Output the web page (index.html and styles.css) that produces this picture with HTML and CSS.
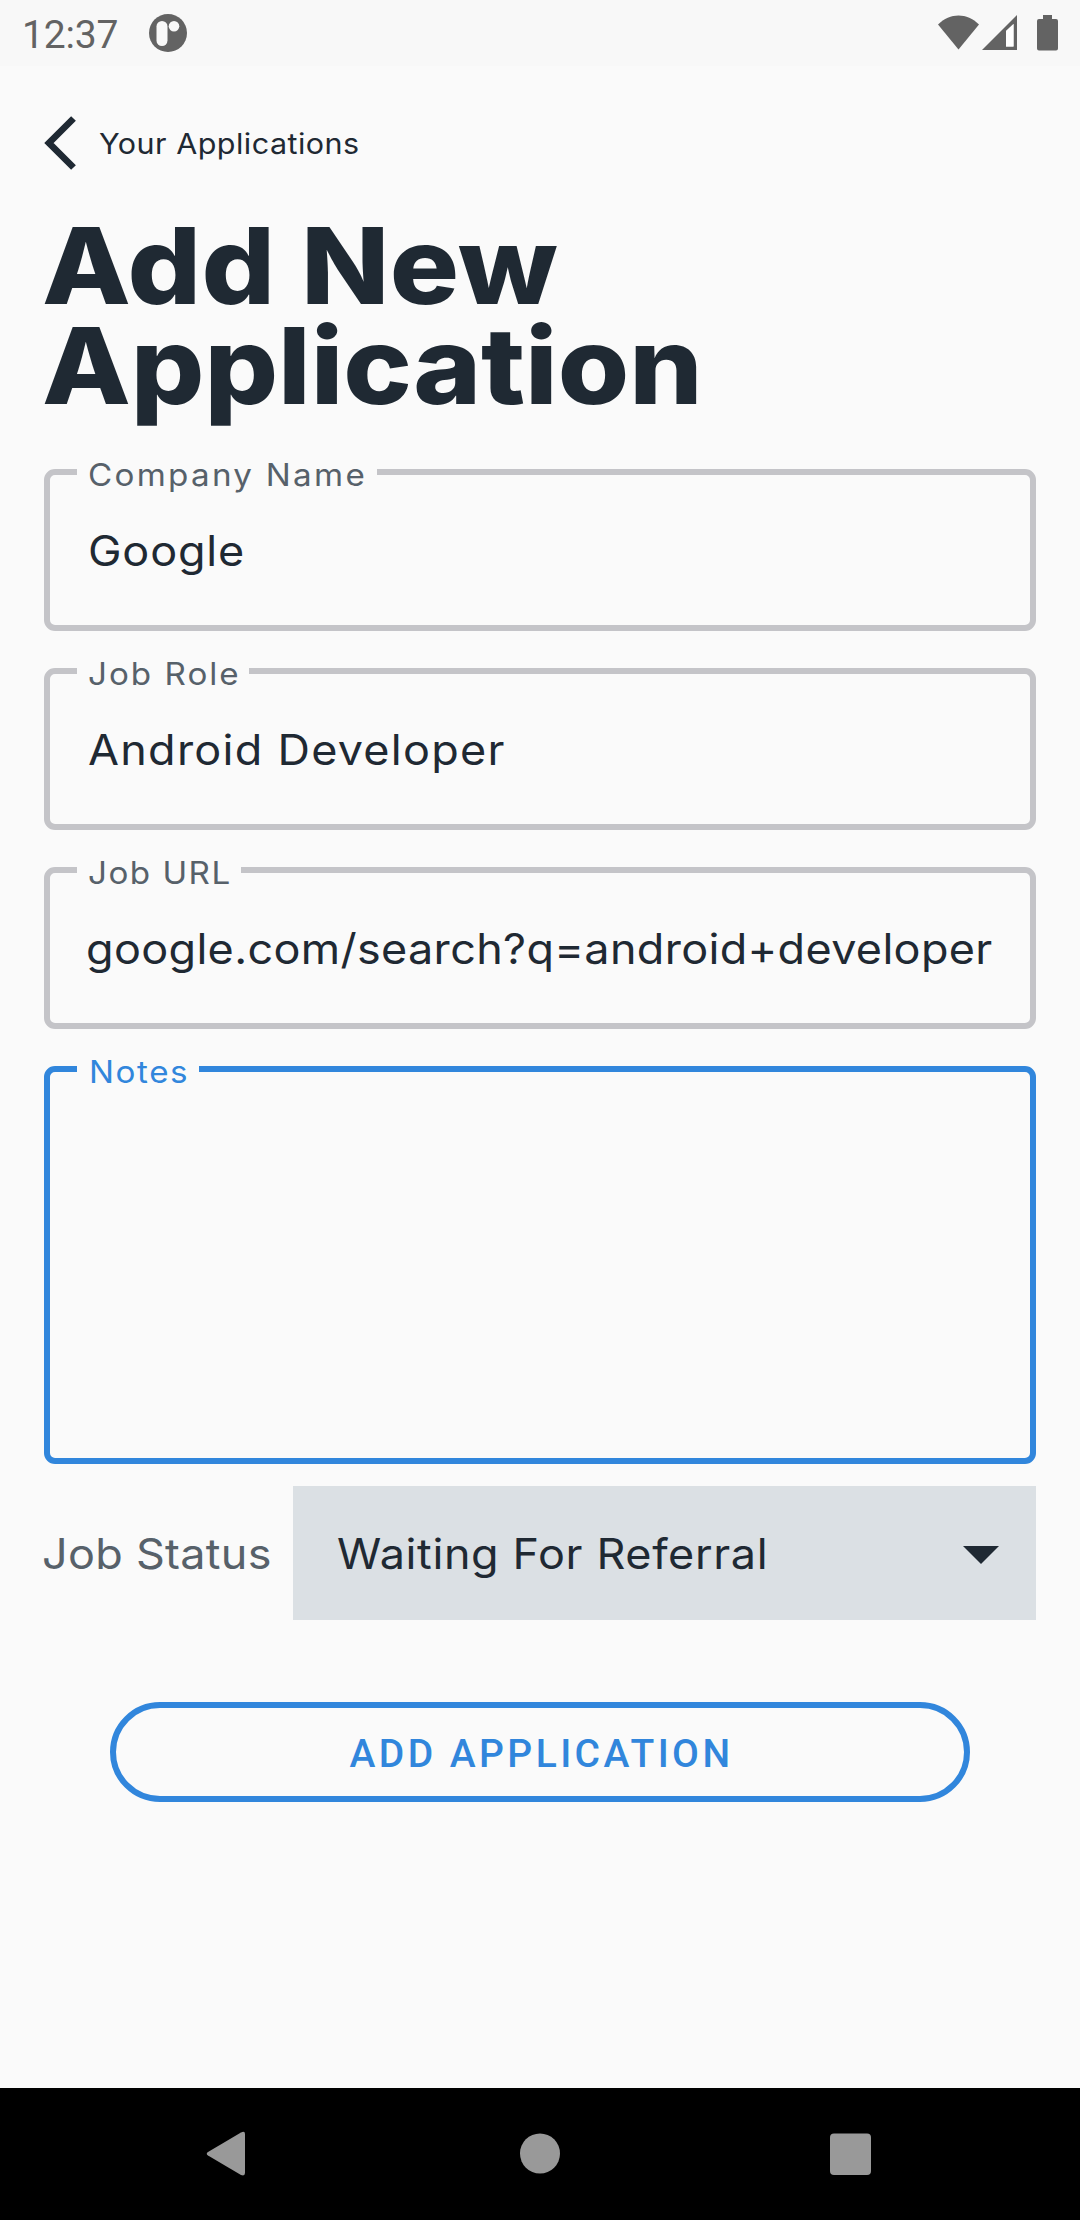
FILE: index.html
```html
<!DOCTYPE html>
<html lang="en">
<head>
<meta charset="utf-8">
<title>Add New Application</title>
<link rel="stylesheet" href="styles.css">
</head>
<body>
<div class="screen">
  <header class="status-bar">
    <span class="clock">12:37</span>
    <svg class="app-icon" width="38" height="38" viewBox="0 0 38 38">
      <circle cx="19" cy="19" r="19" fill="#636363"/>
      <rect x="7.5" y="7" width="11" height="25" rx="5.5" fill="#f8f8f8"/>
      <circle cx="25" cy="12.3" r="5.3" fill="#f8f8f8"/>
    </svg>
    <svg class="system-icons" width="122" height="38" viewBox="0 0 122 38" fill="#636363">
      <path d="M0 10.5C12-1.600 29-1.600 41 10.500L20.500 35.500Z"/>
      <path fill-rule="evenodd" d="M44 36L79 1V36ZM68 17V32.500H75.500V10Z"/>
      <path fill="#fff" d="M68 17V32.500H75.500V10Z"/>
      <path d="M105 1h9v4h4a2 2 0 0 1 2 2v27.500a2 2 0 0 1-2 2h-17a2 2 0 0 1-2-2V7a2 2 0 0 1 2-2h4z"/>
    </svg>
  </header>

  <main class="content">
    <a class="back">
      <svg class="back-icon" width="32" height="54" viewBox="0 0 32 54">
        <path d="M29.500 2.500L5 27L29.500 51.500" fill="none" stroke="#1f2933" stroke-width="6.700"/>
      </svg>
      <span class="back-text wide">Your Applications</span>
    </a>

    <h1 class="title"><span class="title-top">Add New</span><br>Application</h1>

    <form class="form">
      <div class="field">
        <label class="label label-company"><span class="wide">Company Name</span></label>
        <div class="value value-company wide">Google</div>
      </div>
      <div class="field">
        <label class="label label-role"><span class="wide">Job Role</span></label>
        <div class="value value-role wide">Android Developer</div>
      </div>
      <div class="field">
        <label class="label label-url"><span class="wide">Job URL</span></label>
        <div class="value value-url wide">google.com/search?q=android+developer</div>
      </div>
      <div class="field field-notes">
        <label class="label label-notes"><span class="wide">Notes</span></label>
      </div>
    </form>

    <div class="status-row">
      <div class="status-label"><span class="wide">Job Status</span></div>
      <div class="select">
        <span class="wide">Waiting For Referral</span>
        <svg class="caret" width="36" height="18" viewBox="0 0 36 18"><path d="M0 0H36L18 18Z" fill="#1f2933"/></svg>
      </div>
    </div>

    <button class="submit" type="button">ADD APPLICATION</button>
  </main>

  <nav class="nav-bar">
    <svg width="40" height="48" viewBox="0 0 40 48"><path d="M2 22L35 2.500Q39 0.500 39 4V43Q39 46.500 35 45L2 25.500Q-.5 23.700 2 22Z" fill="#999"/></svg>
    <svg class="home" width="40" height="48" viewBox="0 0 40 48"><circle cx="20" cy="23.500" r="20" fill="#999"/></svg>
    <svg width="41" height="48" viewBox="0 0 41 48"><rect y="3.500" width="41" height="41.500" rx="4" fill="#999"/></svg>
  </nav>
</div>
</body>
</html>
```
FILE: styles.css
```css
* { box-sizing: border-box; }

body {
  margin: 0;
  background: #fafafa;
  color: #1f2933;
  font-family: Inter, "Liberation Sans", sans-serif;
}

.screen {
  width: 1080px;
  height: 2220px;
  display: flex;
  flex-direction: column;
  overflow: hidden;
}

/* Extended letterforms for the geometric look of the form text */
.wide {
  display: inline-block;
  transform: scaleX(1.07);
  transform-origin: left center;
}

.status-bar {
  height: 66px;
  padding: 0 20px 0 22px;
  display: flex;
  align-items: center;
  background: #f8f8f8;
  color: #636363;
  font-family: Roboto, sans-serif;
}

.clock {
  width: 127px;
  padding-top: 3px;
  font-size: 39px;
  letter-spacing: -0.180px;
}

.system-icons { margin-left: auto; }

.content {
  flex: 1;
  padding: 47px 44px 0;
}

.back {
  display: flex;
  align-items: center;
  height: 60px;
}

.back-text {
  margin-left: 23px;
  font-size: 28.500px;
  letter-spacing: 0.450px;
}

.title {
  width: 700px;
  margin: 43px 0 53px -2px;
  font-size: 106px;
  font-weight: 800;
  line-height: 100px;
  letter-spacing: -0.070px;
  transform: scaleX(1.09);
  transform-origin: left center;
}

.title-top { letter-spacing: 0.260px; }

.form {
  display: flex;
  flex-direction: column;
  gap: 37px;
}

.field {
  position: relative;
  height: 162px;
  padding: 2px 38px 0;
  border: 6px solid #c4c4c8;
  border-radius: 11px;
  display: flex;
  align-items: center;
}

.field-notes {
  height: 398px;
  border-color: #3186dc;
}

.label {
  position: absolute;
  top: -20px;
  left: 27px;
  padding-left: 10.500px;
  background: #fafafa;
  color: #57616a;
  font-size: 31px;
  line-height: 40px;
  white-space: nowrap;
}

.label-company { width: 300px; letter-spacing: 2.140px; }
.label-role { width: 172px; letter-spacing: 1.880px; }
.label-url { width: 164px; letter-spacing: 1.390px; }
.label-notes { width: 122px; padding-left: 12px; letter-spacing: 1.470px; color: #3186dc; }

.value {
  font-size: 42px;
  line-height: 54px;
  white-space: nowrap;
}

.value-company { letter-spacing: 0.790px; }
.value-role { letter-spacing: 1.190px; }
.value-url { margin-left: -2px; letter-spacing: 0.320px; }

.status-row {
  display: flex;
  margin-top: 22px;
  height: 134px;
  font-size: 42px;
  line-height: 136px;
  letter-spacing: 0.280px;
  white-space: nowrap;
}

.status-label {
  width: 251px;
  margin-left: -2px;
  color: #57616a;
}

.select {
  flex: 1;
  padding: 2px 37px 0 43.500px;
  display: flex;
  align-items: center;
  justify-content: space-between;
  background: #dbe0e4;
  letter-spacing: 0.600px;
}

.caret { margin-top: 2px; }

.submit {
  display: block;
  width: 860px;
  height: 100px;
  margin: 82px auto 0;
  padding: 3px 0 0 3px;
  border: 6px solid #3186dc;
  border-radius: 50px;
  background: transparent;
  color: #3186dc;
  font: 500 39px Roboto, sans-serif;
  letter-spacing: 3.440px;
}

.nav-bar {
  height: 132px;
  padding: 0 209px 0 206px;
  display: flex;
  align-items: center;
  justify-content: space-between;
  background: #000;
}

.home { margin-left: 4px; }
```
